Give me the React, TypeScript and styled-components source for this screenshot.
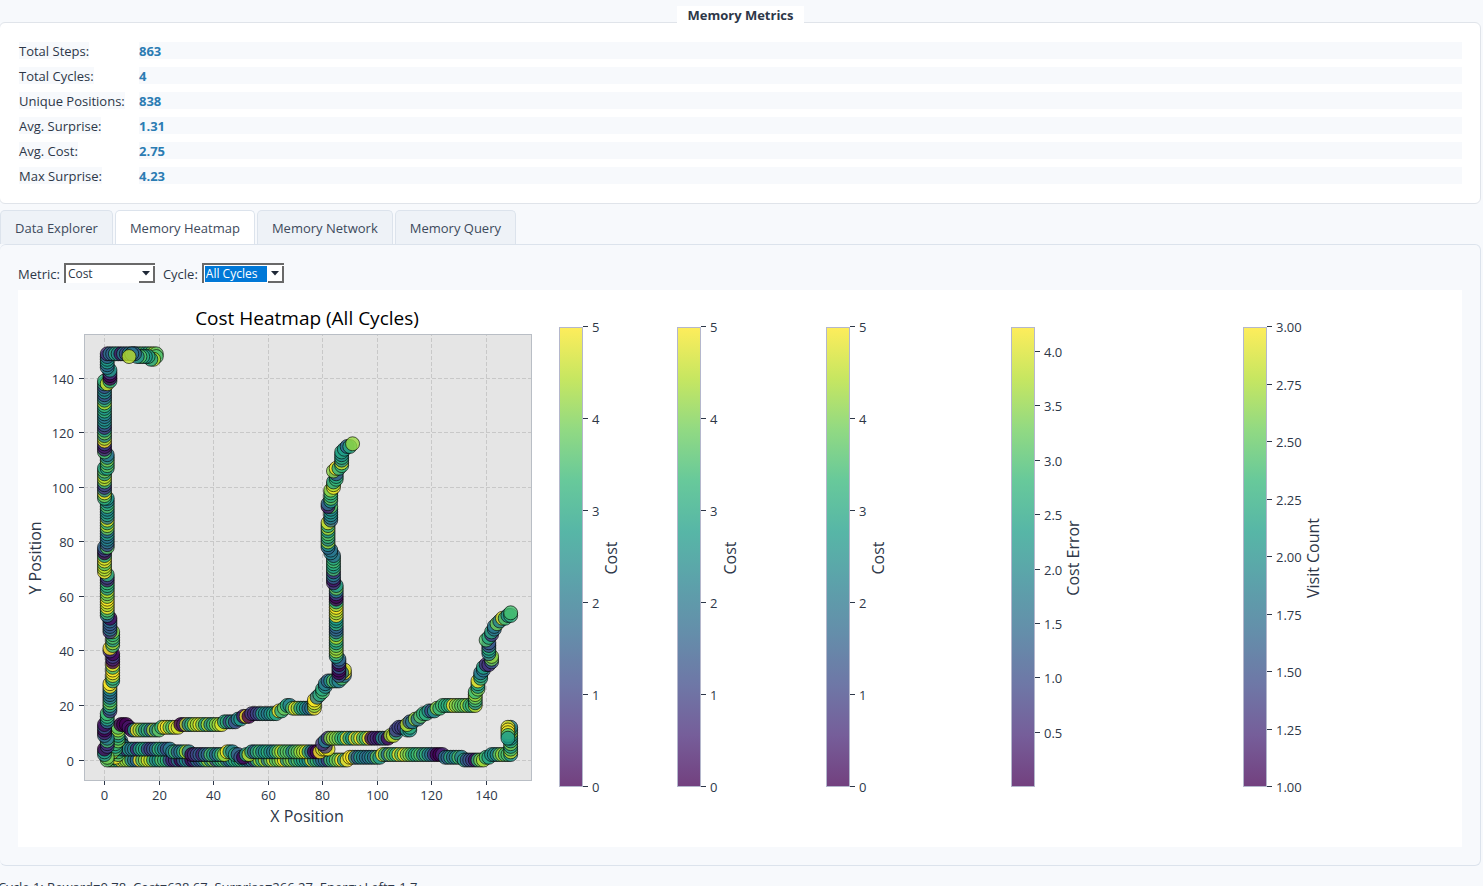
import React from 'react';
import styled, { createGlobalStyle } from 'styled-components';

const GlobalStyle = createGlobalStyle`
  html { overflow: hidden; }
  body {
    margin: 0;
    background: #f7f9fc;
    color: #2d3748;
    font: 13px/17px 'Open Sans', 'Noto Sans', sans-serif;
    overflow: hidden;
  }
  * { box-sizing: border-box; }
`;

const Page = styled.main`
  padding: 6px 2px 0 0;
`;

const TitleRow = styled.header`
  display: flex;
  justify-content: center;
  position: relative;
`;

const Title = styled.h2`
  margin: 0 0 -2px;
  padding: 0 10px;
  background: #fff;
  font-size: 13px;
  line-height: 18px;
  font-weight: 700;
`;

const MetricsCard = styled.dl`
  margin: 0 0 6px -1px;
  padding: 19px 18px 19px 19px;
  display: grid;
  grid-template-columns: 100px 1fr;
  gap: 8px 20px;
  background: #fff;
  border: 1px solid #e0e4ea;
  border-radius: 6px;
`;

const MetricLabel = styled.dt`
  justify-self: start;
  padding-top: 2px;
  line-height: 15px;
  white-space: nowrap;
  background: #f7f9fc;
`;

const MetricValue = styled.dd`
  margin: 0;
  padding-top: 2px;
  line-height: 15px;
  background: #f7f9fc;
  color: #2b7cb3;
  font-weight: 700;
`;

const TabBar = styled.div`
  display: flex;
  gap: 2px;
`;

const Tab = styled.button<{ $active?: boolean }>`
  height: 34px;
  padding: 2px 14px 0;
  border: 1px solid #dce3ec;
  border-bottom: 0;
  border-radius: 5px 5px 0 0;
  background: ${p => (p.$active ? '#fff' : '#eef2f7')};
  color: #3d4a5c;
  font: inherit;
  white-space: nowrap;
`;

const Pane = styled.section`
  padding: 18px;
  border: 1px solid #dce3ec;
  border-left: 0;
  border-radius: 6px;
`;

const Controls = styled.form`
  display: flex;
  align-items: center;
  height: 20px;
  margin-bottom: 7px;
`;

const ControlLabel = styled.label`
  margin-right: 4px;
  padding-top: 2px;
`;

const SelectFrame = styled.span<{ $width: number }>`
  display: flex;
  width: ${p => p.$width}px;
  height: 20px;
  margin-right: 8px;
  padding: 1px 0 0 1px;
  background: #fff;
  border-top: 2px solid #696969;
  border-left: 2px solid #696969;
`;

const Select = styled.select<{ $selected?: boolean }>`
  appearance: none;
  flex: 1;
  min-width: 0;
  height: 16px;
  padding: 0 0 0 1px;
  border: 0;
  outline: 0;
  background: ${p => (p.$selected ? '#0078d7' : '#fff')};
  color: ${p => (p.$selected ? '#fff' : '#2d3748')};
  font: 12px/16px 'Open Sans', 'Noto Sans', sans-serif;
`;

const DropArrow = styled.span`
  display: flex;
  align-items: center;
  justify-content: center;
  width: 16px;
  margin-left: 1px;
  border-right: 2px solid #696969;
  border-bottom: 2px solid #696969;
  pointer-events: none;
`;

const ChartPanel = styled.figure`
  margin: 0;
  background: #fff;
`;

const Chart = styled.svg`
  display: block;
  width: 100%;
  height: auto;
  fill: #2d3748;
  font-family: 'Open Sans', 'Noto Sans', sans-serif;
  font-size: 13px;
`;

const AxisName = styled.text`
  font-size: 16px;
`;

const PlotTitle = styled.text`
  font-size: 19px;
  fill: #000;
`;

const CycleSummary = styled.p`
  margin: 13px 0 0 -2px;
  white-space: nowrap;
`;

const metrics: [string, string][] = [
  ['Total Steps:', '863'],
  ['Total Cycles:', '4'],
  ['Unique Positions:', '838'],
  ['Avg. Surprise:', '1.31'],
  ['Avg. Cost:', '2.75'],
  ['Max Surprise:', '4.23'],
];

const viridis = [
  [68, 1, 84], [72, 40, 120], [62, 74, 137], [49, 104, 142], [38, 130, 142],
  [31, 158, 137], [53, 183, 121], [109, 205, 89], [180, 222, 44], [253, 231, 37],
];

const viridisAt = (t: number) => {
  const p = Math.max(0, Math.min(1, t)) * 9;
  const i = Math.min(8, Math.floor(p));
  const c = viridis[i].map((a, k) => Math.round(a + (viridis[i + 1][k] - a) * (p - i)));
  return `rgb(${c.join(',')})`;
};

// Waypoints of each walk: x, y, typical cost of the steps that lead there.
type Way = [number, number, number];
const walks: Way[][] = [
  [
    [2, 0, 3.5], [9, 0, 4.2], [12, 0, 2.5], [16, 0, 4.5], [20, 0, 3.5], [23, 0, 3], [28, 0, 1.2], [30, 0, 2.5],
    [35, 0, 1], [40, 0, 3], [46, 0, 2.5], [56, 0, 2], [64, 0, 3.4], [66, 0, 4.5], [72, 0, 2.8], [78, 0, 3.8],
    [82, 0, 2], [88, 0, 3.8], [91, 1, 4.4], [96, 1, 1.8], [101, 1, 2.4], [103, 2, 4.4], [106, 2, 2.8],
    [114, 2, 4], [119, 2, 2.6], [123, 2, 0.9], [125, 1, 1.8], [130, 1, 2.2], [133, 0, 2.2], [136, 0, 0.9],
    [139, 0, 4], [141, 1, 3.4], [143, 2, 2.5], [149, 2, 3.4], [149, 6, 3.8], [149, 12, 3.2], [148, 12, 3.8], [148, 9, 4.2], [148, 8, 2.75],
  ],
  [
    [1, 1, 3.8], [4, 1, 4.2], [6, 4, 3], [6, 7, 1.2], [7, 4, 1.5], [12, 4, 2], [18, 4, 1.8], [22, 4, 2], [27, 3, 2],
    [30, 3, 3.2], [32, 2, 1.2], [36, 2, 0.5], [42, 2, 2.4], [44, 2, 4], [46, 3, 4.2], [48, 2, 2], [51, 1, 0.5], [53, 2, 3.8],
    [54, 3, 1.8], [58, 3, 2.5], [66, 3, 3.2], [70, 3, 2.5], [75, 3, 3.8], [78, 3, 0.6], [82, 4, 4], [80, 6, 2.2],
    [82, 8, 2.2], [89, 8, 4], [97, 8, 4], [101, 8, 0.8], [104, 8, 1.2], [106, 9, 4.2], [108, 12, 2], [112, 11, 2], [111, 13, 4.5],
    [113, 14, 1.8], [116, 16, 3], [120, 18, 2.2], [125, 20, 2.8], [136, 20, 3.7], [136, 24, 3.6], [137, 28, 3.2], [138, 31, 4],
    [139, 34, 2], [142, 36, 0.8], [141, 40, 3.2], [141, 43, 2], [140, 44, 4.8], [142, 46, 2], [143, 49, 2.2], [145, 51, 3.5], [149, 53, 3.6], [149, 54, 3.5],
  ],
  [
    [1, 2, 3], [4, 4, 4], [5, 9, 3], [5, 12, 3], [6, 13, 1], [8, 13, 0.4], [10, 11, 1.5], [13, 11, 3.8], [20, 11, 3], [21, 12, 2.5],
    [27, 12, 4.2], [29, 13, 1], [34, 13, 3.5], [42, 13, 3.6], [45, 14, 3.4], [48, 14, 1.8], [51, 16, 1.5], [52, 16, 4], [55, 17, 0.8],
    [63, 17, 2.2], [66, 19, 3.7], [68, 20, 3.5], [69, 19, 3], [73, 19, 3.8], [76, 19, 2], [77, 19, 4.5], [77, 22, 3.8], [79, 24, 3.3], [80, 26, 4],
    [82, 29, 2.6], [86, 29, 2.6], [88, 31, 3], [88, 33, 4], [86, 31, 1.5], [86, 35, 0.2], [86, 37, 0.8], [85, 38, 2], [85, 45, 3.1], [85, 49, 2.2],
    [85, 58, 4], [85, 61, 0.5], [85, 64, 2.8], [84, 65, 0.7], [84, 69, 0.9], [84, 74, 3.5], [83, 77, 2.1], [82, 78, 2.6], [82, 85, 3.5],
    [82, 87, 4], [83, 88, 1.6], [83, 93, 2.8], [82, 93, 1.6], [83, 96, 2.6], [83, 99, 3.2], [84, 101, 4.4], [85, 105, 2.3], [84, 106, 3.8],
    [87, 108, 4], [87, 111, 3.6], [87, 113, 2.1], [89, 115, 2], [90, 115, 2.2], [91, 116, 4.2],
  ],
  [
    [1, 0, 3], [0, 3, 3.4], [1, 6, 0.5], [1, 8, 2.5], [0, 9, 1.5], [0, 13, 0.8], [1, 15, 2.5], [1, 16, 2], [2, 19, 2.2], [2, 26, 2.8],
    [2, 28, 4.5], [3, 30, 3.2], [3, 35, 4.2], [3, 39, 0.3], [2, 40, 2], [3, 44, 3.8], [3, 47, 3.4], [2, 47, 1], [2, 52, 0.9], [1, 53, 1.6],
    [1, 56, 4.6], [1, 62, 4], [1, 65, 2.8], [1, 67, 1.2], [0, 69, 4], [0, 75, 3.8], [0, 78, 0.8], [1, 78, 4.6], [1, 81, 1.2], [1, 84, 2.2],
    [1, 88, 4.4], [1, 91, 1.8], [1, 96, 2.6], [0, 96, 3.4], [0, 99, 3.6], [0, 101, 1.8], [0, 107, 3.2], [1, 107, 4.2], [1, 112, 3.2],
    [0, 113, 3], [0, 116, 1.2], [0, 118, 4.5], [0, 121, 3.4], [0, 126, 1.8], [0, 132, 3.5], [0, 135, 1.6], [0, 137, 1.2],
    [0, 139, 4], [1, 138, 4], [2, 139, 2.8], [2, 142, 0.5], [1, 144, 1.5], [1, 149, 2], [3, 149, 1], [5, 149, 3.5], [8, 149, 1.5], [13, 149, 2.5], [19, 149, 3.7],
    [18, 147, 3.9], [15, 148, 3.8], [12, 148, 3], [10, 149, 1.5], [9, 148, 4.5],
  ],
];

const X0 = 86.5;
const Y0 = 470;
const UNIT = 2.726;

const dots: { x: number; y: number; fill: string }[] = [];
let seed = 11;
const noise = () => {
  seed = (seed * 16807) % 2147483647;
  return seed / 2147483647 - 0.5;
};
walks.forEach(walk => {
  let [px, py] = walk[0];
  walk.forEach(([x, y, cost], i) => {
    const n = Math.max(1, Math.abs(x - px), Math.abs(y - py));
    const last = i === walk.length - 1;
    for (let s = 1; s <= n; s++) {
      const value = last ? cost : cost + noise() * 2.8;
      dots.push({
        x: X0 + Math.round(px + ((x - px) * s) / n) * UNIT,
        y: Y0 - Math.round(py + ((y - py) * s) / n) * UNIT,
        fill: viridisAt(value / 5),
      });
    }
    px = x;
    py = y;
  });
});

type Bar = { x: number; name: string; nameX: number; ticks: string[]; min: number; max: number };
const costTicks = ['0', '1', '2', '3', '4', '5'];
const bars: Bar[] = [
  { x: 541, name: 'Cost', nameX: 599, ticks: costTicks, min: 0, max: 5 },
  { x: 659, name: 'Cost', nameX: 718, ticks: costTicks, min: 0, max: 5 },
  { x: 808, name: 'Cost', nameX: 866, ticks: costTicks, min: 0, max: 5 },
  { x: 993, name: 'Cost Error', nameX: 1061, ticks: ['0.5', '1.0', '1.5', '2.0', '2.5', '3.0', '3.5', '4.0'], min: 0, max: 4.23 },
  { x: 1225, name: 'Visit Count', nameX: 1301, ticks: ['1.00', '1.25', '1.50', '1.75', '2.00', '2.25', '2.50', '2.75', '3.00'], min: 1, max: 3 },
];

const gridSteps = [0, 20, 40, 60, 80, 100, 120, 140];

const Scatter = () => (
  <g>
    <rect x={66} y={44} width={448} height={446} fill="#e5e5e5" />
    {gridSteps.map(v => {
      const gx = Math.floor(X0 + v * UNIT) + 0.5;
      const gy = Math.floor(Y0 - v * UNIT) + 0.5;
      return (
        <g key={v}>
          <path d={`M${gx} 490V44M66 ${gy}H514`} stroke="#c8c8c8" strokeDasharray="4 2" />
          <path d={`M${gx} 490v5M66 ${gy}h-5`} stroke="#2d3748" />
          <text x={gx} y={510} textAnchor="middle">{v}</text>
          <text x={56} y={gy + 5} textAnchor="end">{v}</text>
        </g>
      );
    })}
    {dots.map((d, i) => (
      <circle key={i} cx={d.x} cy={d.y} r={7} fill={d.fill} fillOpacity={0.8} stroke="#000" strokeOpacity={0.7} strokeWidth={0.9} />
    ))}
    <rect x={66.5} y={44.5} width={447} height={446} fill="none" stroke="#b9bec5" />
    <PlotTitle x={289} y={35} textAnchor="middle">Cost Heatmap (All Cycles)</PlotTitle>
    <AxisName x={289} y={532} textAnchor="middle">X Position</AxisName>
    <AxisName transform="translate(23 268) rotate(-90)" textAnchor="middle">Y Position</AxisName>
  </g>
);

const ColorBar = ({ bar }: { bar: Bar }) => (
  <g>
    <rect x={bar.x + 0.5} y={37.5} width={23} height={459} fill="url(#viridis)" />
    <rect x={bar.x + 0.5} y={37.5} width={23} height={459} fill="none" stroke="#b4b7cc" />
    {bar.ticks.map(t => {
      const y = Math.round(496 - ((Number(t) - bar.min) / (bar.max - bar.min)) * 460) + 0.5;
      return (
        <g key={t}>
          <path d={`M${bar.x + 24} ${y}h5`} stroke="#2d3748" />
          <text x={bar.x + 33} y={y + 5}>{t}</text>
        </g>
      );
    })}
    <AxisName transform={`translate(${bar.nameX} 268) rotate(-90)`} textAnchor="middle">{bar.name}</AxisName>
  </g>
);

const Arrow = () => (
  <DropArrow aria-hidden="true">
    <svg width="8" height="5" viewBox="0 0 8 5"><path d="M0 0h8L4 4.500z" fill="#1f2937" /></svg>
  </DropArrow>
);

export default function App() {
  return (
    <Page>
      <GlobalStyle />
      <TitleRow><Title>Memory Metrics</Title></TitleRow>
      <MetricsCard>
        {metrics.map(([label, value]) => (
          <React.Fragment key={label}>
            <MetricLabel>{label}</MetricLabel>
            <MetricValue>{value}</MetricValue>
          </React.Fragment>
        ))}
      </MetricsCard>
      <TabBar role="tablist">
        {['Data Explorer', 'Memory Heatmap', 'Memory Network', 'Memory Query'].map((name, i) => (
          <Tab key={name} type="button" role="tab" aria-selected={i === 1} $active={i === 1}>{name}</Tab>
        ))}
      </TabBar>
      <Pane>
        <Controls>
          <ControlLabel htmlFor="metric">Metric:</ControlLabel>
          <SelectFrame $width={91}>
            <Select id="metric" defaultValue="Cost"><option>Cost</option></Select>
            <Arrow />
          </SelectFrame>
          <ControlLabel htmlFor="cycle">Cycle:</ControlLabel>
          <SelectFrame $width={82}>
            <Select id="cycle" $selected defaultValue="All Cycles"><option>All Cycles</option></Select>
            <Arrow />
          </SelectFrame>
        </Controls>
        <ChartPanel>
          <Chart viewBox="0 0 1444 557" role="img" aria-label="Cost heatmap">
            <defs>
              <linearGradient id="viridis" x1="0" y1="1" x2="0" y2="0">
                {viridis.map((c, i) => (
                  <stop key={i} offset={i / 9} stopColor={`rgb(${c.join(',')})`} stopOpacity={0.75} />
                ))}
              </linearGradient>
            </defs>
            <Scatter />
            {bars.map(bar => <ColorBar key={bar.x} bar={bar} />)}
          </Chart>
        </ChartPanel>
      </Pane>
      <CycleSummary>Cycle 1: Reward=0.78, Cost=628.67, Surprise=266.27, Energy Left=-1.7</CycleSummary>
    </Page>
  );
}
